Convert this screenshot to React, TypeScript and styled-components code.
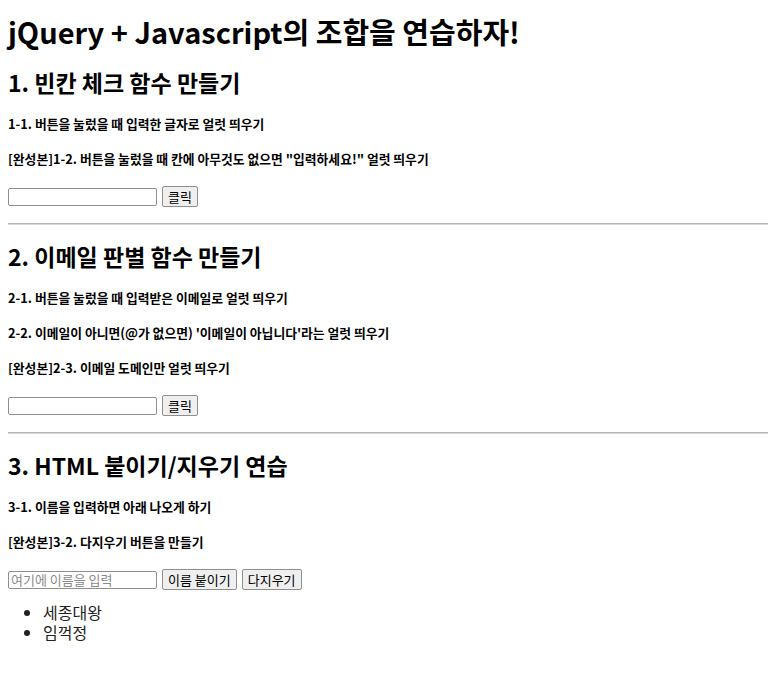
import React from "react";
import styled, { createGlobalStyle } from "styled-components";

const GlobalStyle = createGlobalStyle`
  body {
    margin: 0;
    font-family: "Noto Sans CJK KR", "Noto Sans", sans-serif;
    color: #000;
    background: #fff;
  }
`;

const Page = styled.div`
  display: flow-root;
  padding: 0 8px;
`;

const Title = styled.h1`
  font-size: 29px;
  line-height: 30px;
  margin: 16px 0 23px;
`;

const SectionTitle = styled.h2`
  font-size: 23px;
  line-height: 26px;
  margin: 18px 0 0;
`;

const Task = styled.h5`
  font-size: 12.8px;
  line-height: 13px;
  margin: 22px 0 0;
`;

const Row = styled.div`
  display: flex;
  align-items: center;
  gap: 5px;
  height: 21px;
  margin-top: 21px;
`;

const TextInput = styled.input`
  box-sizing: border-box;
  width: 149px;
  height: 18px;
  margin: 0;
  padding: 1px 2px;
  border: 1px solid #8f8f8f;
  border-radius: 2px;
  font-family: inherit;
  font-size: 13px;

  &::placeholder {
    color: #8a8a8a;
  }
`;

const Button = styled.button`
  box-sizing: border-box;
  height: 21px;
  margin: 0;
  padding: 0 5px;
  background: #efefef;
  border: 1px solid #8f8f8f;
  border-radius: 2px;
  font-family: inherit;
  font-size: 13px;
  line-height: 17px;
  color: #000;
`;

const Divider = styled.hr`
  margin: 16px -8px 0 0;
  border: none;
  border-top: 1px solid #b5b5b5;
  border-bottom: 1px solid #d8d8d8;
`;

const NameList = styled.ul`
  margin: 12px 0 0;
  padding-left: 35px;
  font-size: 16px;
  line-height: 20px;
  color: #222;
`;

export default function App() {
  return (
    <Page>
      <GlobalStyle />
      <Title>jQuery + Javascript의 조합을 연습하자!</Title>

      <SectionTitle>1. 빈칸 체크 함수 만들기</SectionTitle>
      <Task>1-1. 버튼을 눌렀을 때 입력한 글자로 얼럿 띄우기</Task>
      <Task>[완성본]1-2. 버튼을 눌렀을 때 칸에 아무것도 없으면 "입력하세요!" 얼럿 띄우기</Task>
      <Row>
        <TextInput />
        <Button>클릭</Button>
      </Row>
      <Divider />

      <SectionTitle>2. 이메일 판별 함수 만들기</SectionTitle>
      <Task>2-1. 버튼을 눌렀을 때 입력받은 이메일로 얼럿 띄우기</Task>
      <Task>2-2. 이메일이 아니면(@가 없으면) '이메일이 아닙니다'라는 얼럿 띄우기</Task>
      <Task>[완성본]2-3. 이메일 도메인만 얼럿 띄우기</Task>
      <Row>
        <TextInput />
        <Button>클릭</Button>
      </Row>
      <Divider />

      <SectionTitle>3. HTML 붙이기/지우기 연습</SectionTitle>
      <Task>3-1. 이름을 입력하면 아래 나오게 하기</Task>
      <Task>[완성본]3-2. 다지우기 버튼을 만들기</Task>
      <Row>
        <TextInput placeholder="여기에 이름을 입력" />
        <Button>이름 붙이기</Button>
        <Button>다지우기</Button>
      </Row>
      <NameList>
        <li>세종대왕</li>
        <li>임꺽정</li>
      </NameList>
    </Page>
  );
}
